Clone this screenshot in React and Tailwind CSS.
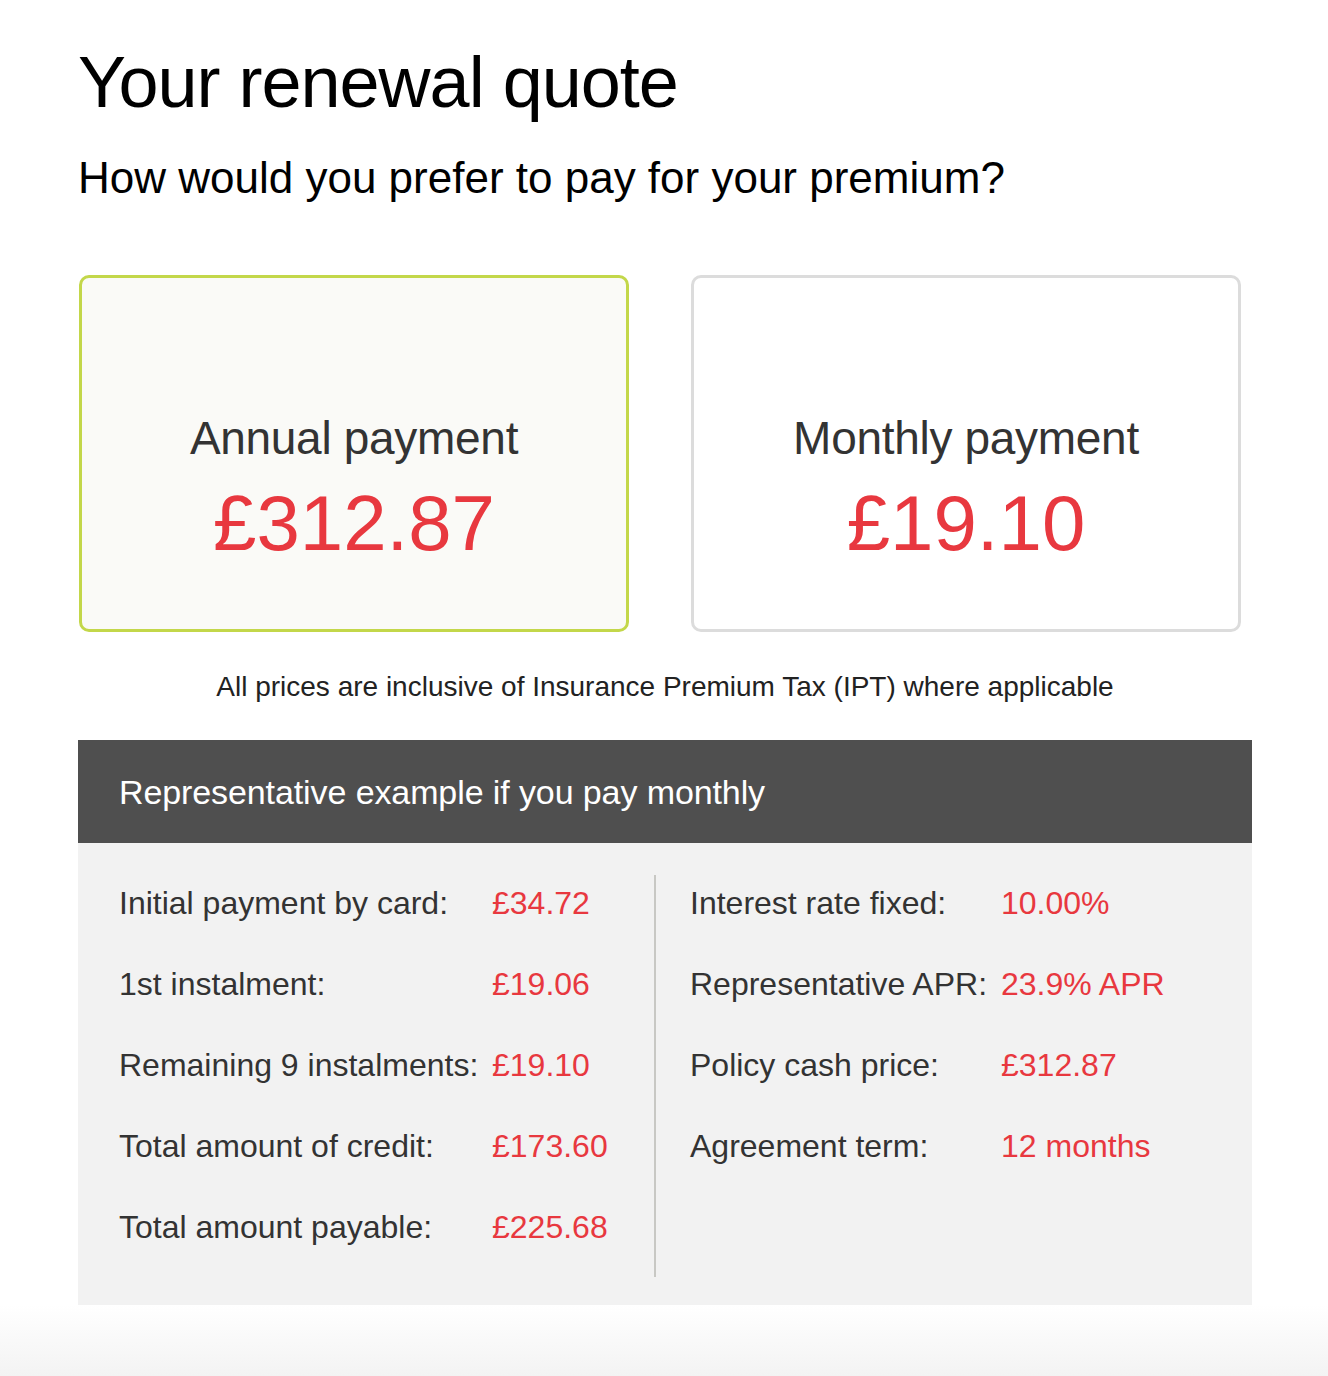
import React from "react";

const leftRows = [
  ["Initial payment by card:", "£34.72"],
  ["1st instalment:", "£19.06"],
  ["Remaining 9 instalments:", "£19.10"],
  ["Total amount of credit:", "£173.60"],
  ["Total amount payable:", "£225.68"],
];

const rightRows = [
  ["Interest rate fixed:", "10.00%"],
  ["Representative APR:", "23.9% APR"],
  ["Policy cash price:", "£312.87"],
  ["Agreement term:", "12 months"],
];

function Rows({ rows, labelWidth }) {
  return (
    <div className={`grid gap-y-[43px] pt-[9px] text-[32px] leading-[38px] ${labelWidth}`}>
      {rows.map(([l, v]) => (
        <React.Fragment key={l}>
          <div className="text-[#333333] whitespace-nowrap">{l}</div>
          <div className="text-[#e8383f] whitespace-nowrap">{v}</div>
        </React.Fragment>
      ))}
    </div>
  );
}

export default function App() {
  return (
    <div className="bg-white min-h-[1376px] flex flex-col font-['Liberation_Sans','Helvetica',Arial,sans-serif]">
      <div className="pl-[78px]">
        <h1 className="mt-[41px] text-[72px] leading-[83px] tracking-[-1px] text-black">
          Your renewal quote
        </h1>
        <p className="mt-[27px] text-[44px] leading-[53px] text-black">
          How would you prefer to pay for your premium?
        </p>

        <div className="mt-[71px] ml-[1px] flex gap-[62px]">
          <div className="w-[550px] h-[357px] rounded-[10px] border-[3px] border-[#c3d74a] bg-[#fafaf7] flex flex-col items-center pt-[133px]">
            <div className="text-[46px] leading-[55px] tracking-[-0.3px] text-[#333333]">Annual payment</div>
            <div className="mt-[18px] text-[78px] leading-[78px] text-[#e8383f]">£312.87</div>
          </div>
          <div className="w-[550px] h-[357px] rounded-[10px] border-[3px] border-[#dcdcdc] bg-white flex flex-col items-center pt-[133px]">
            <div className="text-[46px] leading-[55px] tracking-[-0.3px] text-[#333333]">Monthly payment</div>
            <div className="mt-[18px] text-[78px] leading-[78px] text-[#e8383f]">£19.10</div>
          </div>
        </div>

        <div className="w-[1174px]">
          <p className="mt-[39px] text-center text-[28px] leading-[32px] text-[#222222]">
            All prices are inclusive of Insurance Premium Tax (IPT) where applicable
          </p>

          <div className="mt-[37px]">
            <div className="h-[103px] bg-[#4f4f4f] flex items-center pl-[41px]">
              <h2 className="text-[34px] leading-[40px] tracking-[-0.1px] text-white">
                Representative example if you pay monthly
              </h2>
            </div>
            <div className="h-[462px] bg-[#f2f2f2] pt-[32px] pb-[28px] flex">
              <div className="w-[576px] pl-[41px] pb-[32px]">
                <Rows rows={leftRows} labelWidth="grid-cols-[373px_auto]" />
              </div>
              <div className="w-[2px] bg-[#c8c8c4]" />
              <div className="flex-1 pl-[34px]">
                <Rows rows={rightRows} labelWidth="grid-cols-[311px_auto]" />
              </div>
            </div>
          </div>
        </div>
      </div>
      <div className="flex-1 min-h-[71px] bg-linear-to-b from-white to-[#f3f3f3]" />
    </div>
  );
}
